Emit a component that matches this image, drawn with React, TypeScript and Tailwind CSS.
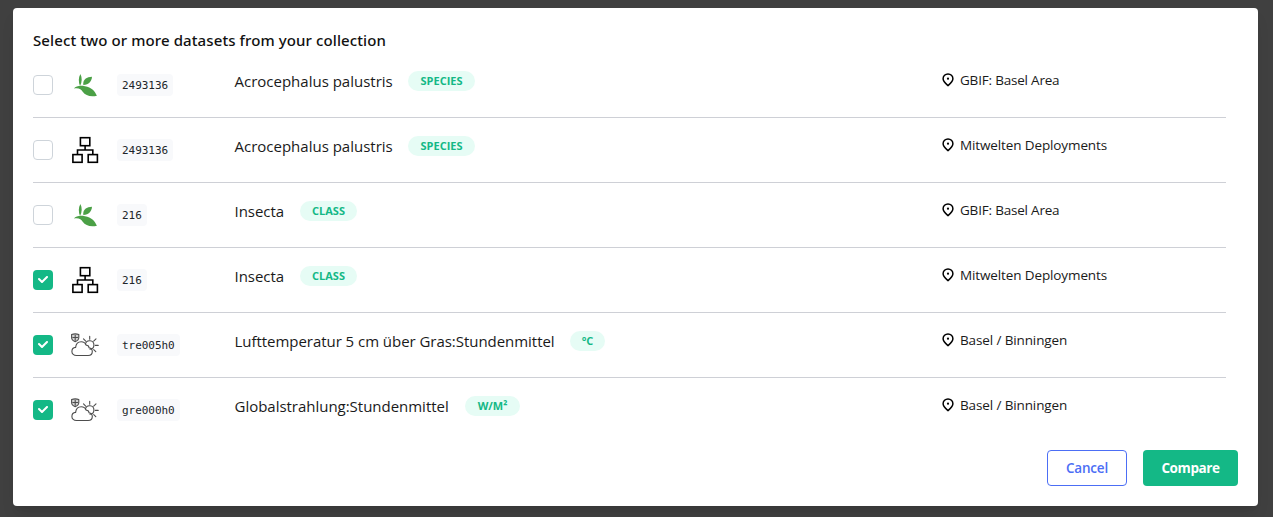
type Kind = 'leaf' | 'tree' | 'weather';

interface Dataset {
  checked: boolean;
  kind: Kind;
  id: string;
  name: string;
  nameClass: string;
  tag: string;
  tagClass: string;
  location: string;
  locationClass: string;
}

const acro = 'w-[157.5px] tracking-[0px]';
const insecta = 'w-[49.5px] tracking-[-0.05px]';

const datasets: Dataset[] = [
  { checked: false, kind: 'leaf', id: '2493136', name: 'Acrocephalus palustris', nameClass: acro, tag: 'SPECIES', tagClass: 'w-[67px]', location: 'GBIF: Basel Area', locationClass: 'tracking-[-0.2px]' },
  { checked: false, kind: 'tree', id: '2493136', name: 'Acrocephalus palustris', nameClass: acro, tag: 'SPECIES', tagClass: 'w-[67px]', location: 'Mitwelten Deployments', locationClass: 'tracking-[-0.12px]' },
  { checked: false, kind: 'leaf', id: '216', name: 'Insecta', nameClass: insecta, tag: 'CLASS', tagClass: 'w-[57px]', location: 'GBIF: Basel Area', locationClass: 'tracking-[-0.2px]' },
  { checked: true, kind: 'tree', id: '216', name: 'Insecta', nameClass: insecta, tag: 'CLASS', tagClass: 'w-[57px]', location: 'Mitwelten Deployments', locationClass: 'tracking-[-0.12px]' },
  { checked: true, kind: 'weather', id: 'tre005h0', name: 'Lufttemperatur 5 cm über Gras:Stundenmittel', nameClass: 'w-[319.5px] tracking-[-0.04px]', tag: '°C', tagClass: 'w-[35px]', location: 'Basel / Binningen', locationClass: 'tracking-[-0.12px]' },
  { checked: true, kind: 'weather', id: 'gre000h0', name: 'Globalstrahlung:Stundenmittel', nameClass: 'w-[214.5px] tracking-[-0.02px]', tag: 'W/M²', tagClass: 'w-[55px]', location: 'Basel / Binningen', locationClass: 'tracking-[-0.12px]' },
];

function LeafIcon() {
  return (
    <svg width="28" height="28" viewBox="0 0 28 28" fill="#4ba046">
      <path d="M9.4 3C7.4 6.5 7.3 11 9 15.1C11.2 11 11.2 6.5 9.4 3Z" />
      <path d="M21 5.8C15.8 6 11.6 8.4 12.3 14C18 13.6 20.6 10.6 21 5.8Z" />
      <path d="M2.9 17.4C5 14.9 9.5 14.3 14 15.3C20.5 16.6 23.6 19.6 25.9 24.8C19.3 26.3 14.4 24.4 11.7 20.7C10 18.3 8.2 16.6 2.9 17.4Z" />
    </svg>
  );
}

function TreeIcon() {
  return (
    <svg width="28" height="28" viewBox="0 0 28 28" fill="none" stroke="#000" strokeWidth="1.6">
      <rect x="9.4" y="1.7" width="9.4" height="8" />
      <rect x="1.9" y="18.6" width="9.2" height="7.7" />
      <rect x="17.2" y="18.6" width="9.2" height="7.7" />
      <path d="M14.1 10v4M6.5 18.5V14h15.3v4.5" />
    </svg>
  );
}

function WeatherIcon() {
  return (
    <svg width="28" height="28" viewBox="0 0 28 28" fill="none" stroke="#4d4d4d" strokeWidth="1.1" strokeLinecap="round">
      <path d="M5.5 24.5C2.8 24.5.9 22.9.9 20.4C.9 17.9 2.4 16.6 4.6 16.4C5 12.8 7.2 10.7 10.2 10.7C12.7 10.7 14.4 12 15.3 14.3C16.8 14 17.7 15 18 16.7C20.2 17.2 21.3 18.6 21.3 20.5C21.3 22.9 19.7 24.5 17.1 24.5Z" />
      <path d="M14.4 13.2A4.3 4.3 0 1 1 19 18.3" />
      <path d="M18.7 5.2v3M12.5 7.9l2.2 2.2M25 7.9l-2.3 2.2M24.3 14.4h2.9M22.7 18.6l2.1 2.1" />
      <path d="M.6 3.6Q4.2 2.2 7.8 3.6V6.6C7.8 8.8 6.4 10 4.2 10.6C2 10 .6 8.8 .6 6.6Z" fill="#d4d4d4" />
      <path d="M4.2 4.2v5M1.8 6.5h4.8" />
    </svg>
  );
}

function KindIcon({ kind }: { kind: Kind }) {
  if (kind === 'leaf') return <LeafIcon />;
  if (kind === 'tree') return <TreeIcon />;
  return <WeatherIcon />;
}

function PinIcon() {
  return (
    <svg className="mt-[3px] shrink-0" width="14" height="14" viewBox="0 0 14 14" fill="none" stroke="#000" strokeWidth="1.5">
      <path d="M7 12.6C4.4 10.4 2.1 8.7 2.1 5.8A4.9 4.9 0 0 1 11.9 5.8C11.9 8.7 9.6 10.4 7 12.6Z" />
      <circle cx="7" cy="5.7" r="1.1" fill="#000" stroke="none" />
    </svg>
  );
}

function Checkbox({ checked }: { checked: boolean }) {
  return (
    <button
      role="checkbox"
      aria-checked={checked}
      className={
        checked
          ? 'flex size-5 items-center justify-center rounded bg-[#14b886]'
          : 'size-5 rounded border border-[#ced4da] bg-white'
      }
    >
      {checked && (
        <svg className="-mt-px" width="10" height="7" viewBox="0 0 10 7" fill="#fff">
          <path d="M4 4.586L1.707 2.293A1 1 0 1 0 .293 3.707l3 3a.997.997 0 0 0 1.414 0l5-5A1 1 0 1 0 8.293.293L4 4.586z" />
        </svg>
      )}
    </button>
  );
}

function Row({ item }: { item: Dataset }) {
  return (
    <li className="flex h-[65px] border-b border-[#ced0d6] last:border-b-0">
      <div className="w-[37.5px] pt-[22px]"><Checkbox checked={item.checked} /></div>
      <div className="w-[46.5px] pt-[18px]"><KindIcon kind={item.kind} /></div>
      <div className="w-[117.5px] pt-[21px]">
        <code className="inline-block h-[22px] rounded bg-[#f8f9fb] px-[5px] align-top font-['DejaVu_Sans_Mono',monospace] text-[11px] leading-[23px] tracking-[-0.04px] text-[#212529]">{item.id}</code>
      </div>
      <div className="flex flex-1 gap-4 pt-[18px]">
        <span className={`h-5 whitespace-nowrap text-[15px] leading-5 text-[#1a1a1a] ${item.nameClass}`}>{item.name}</span>
        <span className={`h-5 rounded-full bg-[#e6fcf5] text-center text-[11px] font-bold leading-5 text-[#14b886] ${item.tagClass}`}>{item.tag}</span>
      </div>
      <div className="flex w-[285px] gap-[5px] pt-[17px]">
        <PinIcon />
        <span className={`whitespace-nowrap text-[13.5px] leading-5 text-[#1a1a1a] ${item.locationClass}`}>{item.location}</span>
      </div>
    </li>
  );
}

export default function App() {
  return (
    <div className="h-[517px] bg-[#404040] px-[13px] pt-2 font-['Open_Sans','Noto_Sans',sans-serif] text-black">
      <div className="mr-[2px] flex h-[498px] flex-col rounded bg-white pl-5 pr-5 shadow-lg">
        <h2 className="h-[45px] whitespace-nowrap pt-[21px] font-['Noto_Sans',sans-serif] text-[15px] font-medium leading-[22px] tracking-[0.1px] text-[#111]">Select two or more datasets from your collection</h2>
        <ul className="mr-3 h-[383px] overflow-hidden">
          {datasets.map((item, i) => <Row key={i} item={item} />)}
        </ul>
        <div className="mt-[14px] flex justify-end gap-4 text-[13.5px] font-semibold tracking-[-0.2px]">
          <button className="h-9 w-20 rounded border border-[#4c6ef5] text-[#4c6ef5]">Cancel</button>
          <button className="h-9 w-[95px] rounded bg-[#14b886] font-bold tracking-[-0.4px] text-white">Compare</button>
        </div>
      </div>
    </div>
  );
}
